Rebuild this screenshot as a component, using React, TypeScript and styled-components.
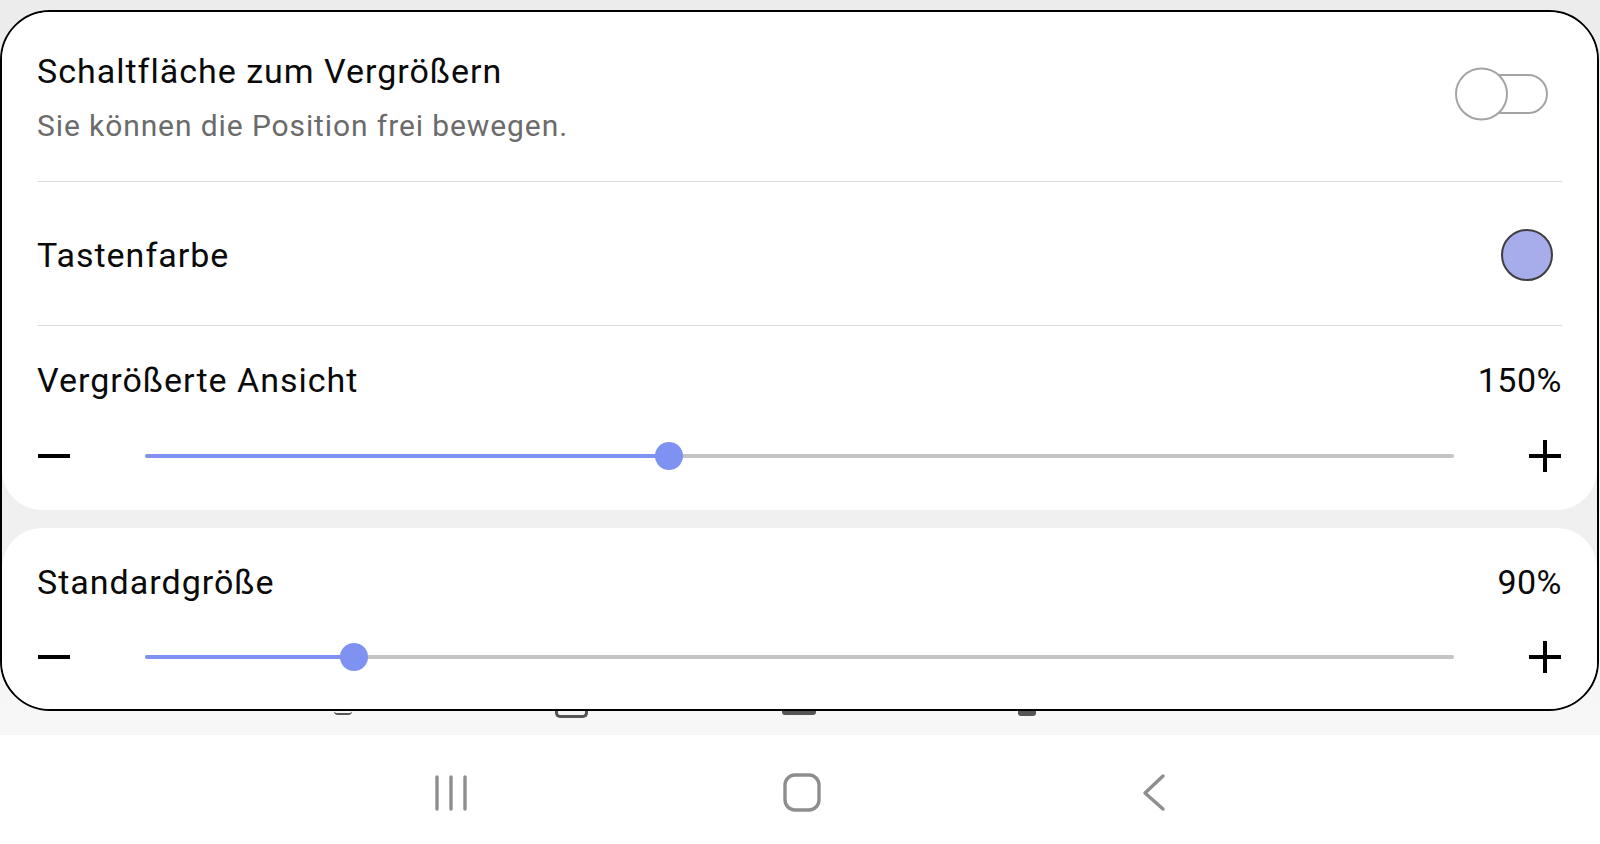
import React from "react";
import styled, { createGlobalStyle } from "styled-components";

const GlobalStyle = createGlobalStyle`
  html, body { margin: 0; padding: 0; background: #ffffff; }
  body { font-family: Roboto, "Noto Sans", Arial, sans-serif; }
  * { box-sizing: border-box; }
`;

const Screen = styled.div`
  width: 1600px;
  height: 844px;
  display: flex;
  flex-direction: column;
  overflow: hidden;
  background: #ffffff;
`;

const Stage = styled.div`
  background: linear-gradient(#ececec, #f7f7f7);
  padding-top: 10px;
  display: flex;
  flex-direction: column;
`;

const Popup = styled.div`
  width: 1599px;
  border: 2px solid #000;
  border-radius: 50px;
  background: #f0f0f0;
  overflow: hidden;
  display: flex;
  flex-direction: column;
  gap: 18px;
`;

const Section = styled.section<{ $first?: boolean }>`
  background: #ffffff;
  border-radius: ${(p) => (p.$first ? "0 0 40px 40px" : "40px 40px 0 0")};
  padding: 0 35px;
  display: flex;
  flex-direction: column;
`;

const ToggleRow = styled.div`
  display: flex;
  justify-content: space-between;
  align-items: flex-start;
  padding: 39px 0 37px;
  border-bottom: 1px solid #dedede;
`;

const TextBlock = styled.div`
  display: flex;
  flex-direction: column;
  gap: 17px;
`;

const Title = styled.div`
  font-size: 34px;
  line-height: 40px;
  letter-spacing: 1px;
  color: #0a0a0a;
`;

const Subtitle = styled.div`
  font-size: 30px;
  line-height: 36px;
  letter-spacing: 0.9px;
  color: #6b6b6b;
`;

const Toggle = styled.div`
  position: relative;
  width: 91px;
  height: 40px;
  margin-top: 23px;
  margin-right: 14px;
  border: 2px solid #a4a4a4;
  border-radius: 20px;
  background: #fff;
`;

const Knob = styled.span`
  position: absolute;
  left: -4px;
  top: 50%;
  width: 53px;
  height: 53px;
  transform: translateY(-50%);
  border: 2px solid #a4a4a4;
  border-radius: 50%;
  background: #fff;
`;

const ColorRow = styled.div`
  height: 144px;
  padding-top: 2px;
  display: flex;
  align-items: center;
  justify-content: space-between;
  border-bottom: 1px solid #dedede;
`;

const Swatch = styled.span<{ $color: string }>`
  width: 52px;
  height: 52px;
  margin-right: 9px;
  border-radius: 50%;
  border: 2px solid #3f3f3f;
  background: ${(p) => p.$color};
`;

const SliderBlock = styled.div<{ $gap: number; $bottom: number }>`
  display: flex;
  flex-direction: column;
  gap: ${(p) => p.$gap}px;
  padding: 34px 0 ${(p) => p.$bottom}px;
`;

const SliderHeader = styled.div`
  display: flex;
  justify-content: space-between;
  align-items: center;
  height: 40px;
  font-size: 34px;
  line-height: 40px;
  color: #0a0a0a;
`;

const Label = styled.span`
  letter-spacing: 1px;
`;

const Value = styled.span`
  letter-spacing: 0.5px;
`;

const SliderRow = styled.div`
  display: flex;
  align-items: center;
  height: 40px;
  gap: 74px;
`;

const SignIcon = styled.svg`
  flex: none;
  display: block;
`;

const Track = styled.div`
  position: relative;
  flex: 1;
  height: 4px;
  border-radius: 2px;
  background: #c4c4c4;
`;

const Fill = styled.div`
  position: absolute;
  left: 0;
  top: 0;
  height: 100%;
  border-radius: 2px;
  background: #7f92f1;
`;

const Thumb = styled.span`
  position: absolute;
  top: 50%;
  width: 28px;
  height: 28px;
  border-radius: 50%;
  background: #7f92f1;
  transform: translate(-50%, -50%);
`;

const PeekStrip = styled.div`
  height: 24px;
  display: flex;
  padding-left: 229px;
`;

const PeekCell = styled.div`
  width: 228px;
  display: flex;
  justify-content: center;
  align-items: flex-start;
`;

const PeekArc = styled.span`
  width: 18px;
  height: 4px;
  border-bottom: 2px solid #555;
  border-radius: 0 0 9px 9px;
`;

const PeekOutline = styled.span`
  width: 33px;
  height: 7px;
  border: 3px solid #555;
  border-top: none;
  border-radius: 0 0 5px 5px;
`;

const PeekBar = styled.span<{ $w: number; $h: number }>`
  width: ${(p) => p.$w}px;
  height: ${(p) => p.$h}px;
  background: #555;
  border-radius: 0 0 3px 3px;
`;

const NavBar = styled.nav`
  flex: 1;
  background: #ffffff;
  display: flex;
  justify-content: center;
  align-items: center;
  gap: 311px;
  padding: 7px 0 0 4px;
`;

const NavIcon = styled.svg`
  display: block;
  width: 40px;
  height: 40px;
`;

function Minus() {
  return (
    <SignIcon width="34" height="34" viewBox="0 0 34 34">
      <line x1="1" y1="17" x2="33" y2="17" stroke="#000" strokeWidth="4" />
    </SignIcon>
  );
}

function Plus() {
  return (
    <SignIcon width="34" height="34" viewBox="0 0 34 34">
      <line x1="1" y1="17" x2="33" y2="17" stroke="#000" strokeWidth="4" />
      <line x1="17" y1="1" x2="17" y2="33" stroke="#000" strokeWidth="4" />
    </SignIcon>
  );
}

function Slider({ value }: { value: number }) {
  const pct = `${value * 100}%`;
  return (
    <SliderRow>
      <Minus />
      <Track>
        <Fill style={{ width: pct }} />
        <Thumb style={{ left: pct }} />
      </Track>
      <Plus />
    </SliderRow>
  );
}

export default function App() {
  return (
    <>
      <GlobalStyle />
      <Screen>
        <Stage>
          <Popup>
            <Section $first>
              <ToggleRow>
                <TextBlock>
                  <Title>Schaltfläche zum Vergrößern</Title>
                  <Subtitle>Sie können die Position frei bewegen.</Subtitle>
                </TextBlock>
                <Toggle>
                  <Knob />
                </Toggle>
              </ToggleRow>
              <ColorRow>
                <Title>Tastenfarbe</Title>
                <Swatch $color="#a7acea" />
              </ColorRow>
              <SliderBlock $gap={36} $bottom={34}>
                <SliderHeader>
                  <Label>Vergrößerte Ansicht</Label>
                  <Value>150%</Value>
                </SliderHeader>
                <Slider value={0.4} />
              </SliderBlock>
            </Section>
            <Section>
              <SliderBlock $gap={35} $bottom={32}>
                <SliderHeader>
                  <Label>Standardgröße</Label>
                  <Value>90%</Value>
                </SliderHeader>
                <Slider value={0.16} />
              </SliderBlock>
            </Section>
          </Popup>
          <PeekStrip>
            <PeekCell>
              <PeekArc />
            </PeekCell>
            <PeekCell>
              <PeekOutline />
            </PeekCell>
            <PeekCell>
              <PeekBar $w={34} $h={4} />
            </PeekCell>
            <PeekCell>
              <PeekBar $w={18} $h={5} />
            </PeekCell>
          </PeekStrip>
        </Stage>
        <NavBar>
          <NavIcon viewBox="0 0 40 40">
            <g stroke="#8e8e8e" strokeWidth="3.4" strokeLinecap="round">
              <line x1="6" y1="4" x2="6" y2="36" />
              <line x1="20" y1="4" x2="20" y2="36" />
              <line x1="34" y1="4" x2="34" y2="36" />
            </g>
          </NavIcon>
          <NavIcon viewBox="0 0 40 40">
            <rect x="3" y="2" width="34" height="35" rx="10" fill="none" stroke="#8e8e8e" strokeWidth="3.4" />
          </NavIcon>
          <NavIcon viewBox="0 0 40 40">
            <polyline points="30,3 12,20 30,36" fill="none" stroke="#8e8e8e" strokeWidth="3.4" strokeLinecap="round" strokeLinejoin="round" />
          </NavIcon>
        </NavBar>
      </Screen>
    </>
  );
}
